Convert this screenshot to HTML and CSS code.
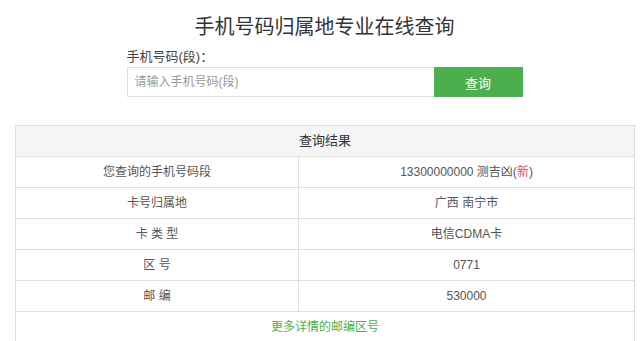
FILE: index.html
```html
<!DOCTYPE html>
<html lang="zh-CN">
<head>
<meta charset="utf-8">
<title>手机号码归属地专业在线查询</title>
<link rel="stylesheet" href="styles.css">
</head>
<body>
<div class="page">
  <h1 class="title">手机号码归属地专业在线查询</h1>
  <div class="search">
    <div class="label">手机号码(段)：</div>
    <div class="form">
      <input class="input" type="text" placeholder="请输入手机号码(段)">
      <button class="btn" type="button">查询</button>
    </div>
  </div>
  <table class="result">
    <colgroup><col class="c1"><col class="c2"></colgroup>
    <thead>
      <tr><th colspan="2">查询结果</th></tr>
    </thead>
    <tbody>
      <tr><td>您查询的手机号码段</td><td>13300000000 测吉凶(<span class="new">新</span>)</td></tr>
      <tr><td>卡号归属地</td><td>广西 南宁市</td></tr>
      <tr><td>卡 类 型</td><td>电信CDMA卡</td></tr>
      <tr><td>区 号</td><td>0771</td></tr>
      <tr><td>邮 编</td><td>530000</td></tr>
      <tr><td colspan="2" class="more"><a href="#">更多详情的邮编区号</a></td></tr>
    </tbody>
  </table>
</div>
</body>
</html>
```

FILE: styles.css
```css
html, body {
  margin: 0;
  padding: 0;
  background: #fff;
}
body {
  font-family: "Liberation Sans", "Noto Sans CJK SC", sans-serif;
  color: #333;
}
.page {
  width: 619px;
  margin-left: 15px;
}
.title {
  margin: 13px 0 0;
  font-size: 20px;
  line-height: 28px;
  font-weight: normal;
  text-align: center;
  color: #333;
}
.search {
  width: 396px;
  margin: 7px auto 0;
}
.label {
  font-size: 13px;
  line-height: 18px;
  color: #444;
  margin-bottom: 1px;
}
.form {
  display: flex;
  height: 30px;
}
.input {
  box-sizing: border-box;
  width: 307px;
  height: 30px;
  margin: 0;
  padding: 0 7px;
  border: 1px solid #ddd;
  border-right: none;
  font-family: inherit;
  font-size: 12px;
  color: #555;
  outline: none;
}
.input::placeholder {
  color: #999;
}
.btn {
  box-sizing: border-box;
  width: 89px;
  height: 30px;
  margin: 0;
  padding: 0;
  border: none;
  background: #4cae4c;
  color: #fff;
  font-family: inherit;
  font-size: 13px;
}
.result {
  margin-top: 28px;
  width: 619px;
  border-collapse: collapse;
  table-layout: fixed;
  font-size: 12px;
  color: #555;
}
.c1 { width: 283px; }
.c2 { width: 336px; }
.result th,
.result td {
  border: 1px solid #ddd;
  padding: 0;
  line-height: 30px;
  text-align: center;
}
.result th {
  background: #f5f5f5;
  font-weight: normal;
  font-size: 13px;
  color: #333;
}
.new {
  color: #d9534f;
}
.more a {
  color: #4cae4c;
  text-decoration: none;
}
```
